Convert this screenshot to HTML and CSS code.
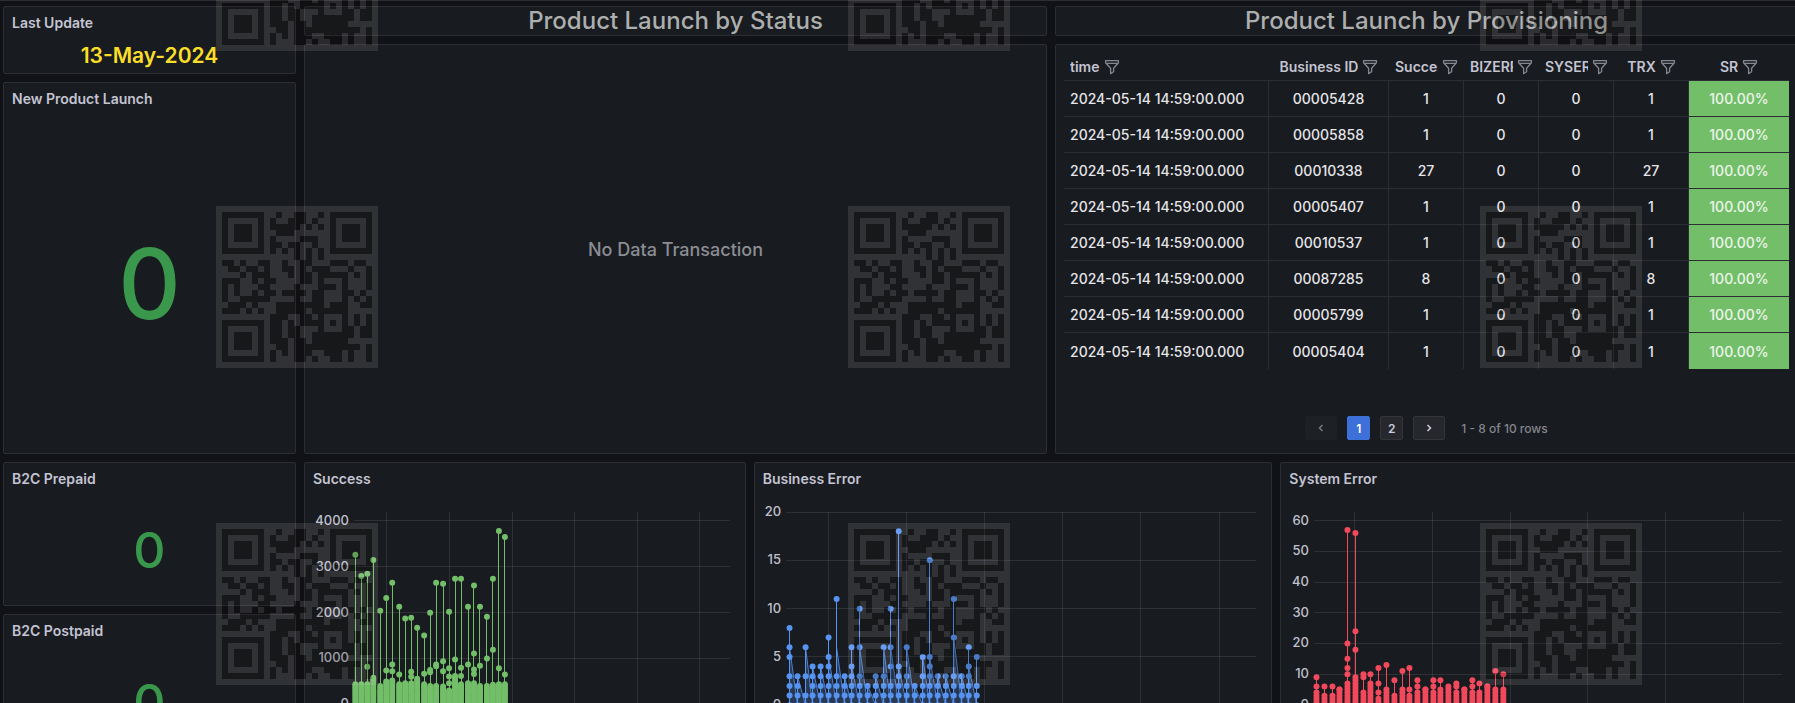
FILE: index.html
```html
<!DOCTYPE html>
<html lang="en">
<head>
<meta charset="utf-8">
<title>Product Launch</title>
<link rel="stylesheet" href="styles.css">
</head>
<body>
<svg class="defs" aria-hidden="true">
  <symbol id="funnel" viewBox="0 0 16 16">
    <path d="M1.6 1.6h12.8v2.2L9.6 9.2v3.6L6.6 14.6V9.2L1.6 3.8zM1.8 4.4h12.4" fill="none" stroke="currentColor" stroke-width="1.3" stroke-linejoin="round"/>
  </symbol>
</svg>
<main class="dashboard">
  <div class="side">
    <section class="panel panel-date"><h2 class="title">Last Update</h2><p class="date">13-May-2024</p></section>
    <section class="panel panel-launch"><h2 class="title">New Product Launch</h2><p class="stat stat-large">0</p></section>
    <section class="panel panel-stat"><h2 class="title">B2C Prepaid</h2><p class="stat">0</p></section>
    <section class="panel panel-stat"><h2 class="title">B2C Postpaid</h2><p class="stat">0</p></section>
  </div>
  <div class="content">
    <div class="halves">
      <h1 class="panel heading">Product Launch by Status</h1>
      <h1 class="panel heading">Product Launch by Provisioning</h1>
      <section class="panel empty"><p>No Data Transaction</p></section>
      <section class="panel table-panel">
        <table class="table">
          <colgroup><col class="c-time"><col class="c-id"><col class="c-num"><col class="c-num"><col class="c-num"><col class="c-num"><col class="c-sr"></colgroup>
          <thead><tr id="head"></tr></thead>
          <tbody id="rows"></tbody>
        </table>
        <nav class="pager" aria-label="Pages">
          <button class="page page-arrow" disabled aria-label="Previous"><svg viewBox="0 0 16 16"><path d="M9.5 5 6.5 8l3 3"/></svg></button>
          <button class="page page-current">1</button>
          <button class="page">2</button>
          <button class="page page-arrow" aria-label="Next"><svg viewBox="0 0 16 16"><path d="m6.5 5 3 3-3 3"/></svg></button>
          <span class="summary">1 - 8 of 10 rows</span>
        </nav>
      </section>
    </div>
    <div class="charts">
      <section class="panel"><h2 class="title">Success</h2><svg class="chart green" id="success" viewBox="0 0 441 220"></svg></section>
      <section class="panel"><h2 class="title">Business Error</h2><svg class="chart blue" id="business" viewBox="0 0 516 220"></svg></section>
      <section class="panel"><h2 class="title">System Error</h2><svg class="chart red" id="system" viewBox="0 0 516 220"></svg></section>
    </div>
  </div>
</main>
<svg class="watermark" aria-hidden="true">
  <defs><pattern id="code" x="216" y="206" width="632" height="317" patternUnits="userSpaceOnUse">
    <path class="mark-light" id="light"/><path class="mark-dark" id="dark"/>
  </pattern></defs>
  <rect width="100%" height="100%" fill="url(#code)"/>
</svg>
<script src="app.js"></script>
</body>
</html>
```
FILE: styles.css
```css
* { box-sizing: border-box; }
body {
  margin: 0;
  height: 100vh;
  overflow: hidden;
  background: #111217;
  border-top: 1px solid #2b2d31;
  color: #ccccdc;
  font-family: Inter, "Liberation Sans", sans-serif;
  font-size: 14px;
  font-weight: 500;
}
h1, h2, p { margin: 0; font-weight: 500; }
.defs { position: absolute; width: 0; height: 0; }
.dashboard {
  display: grid;
  grid-template-columns: 293fr 1494fr;
  gap: 8px;
  margin: 5px -3px 0 3px;
}
.side, .content { display: flex; flex-direction: column; gap: 8px; min-width: 0; }
.panel {
  background: #181b1f;
  border: 1px solid #2c2e33;
  border-radius: 2px;
  min-width: 0;
}
.title { font-size: 14px; font-weight: 600; line-height: 32px; padding: 0 8px; color: #c4c4d3; }
.panel-date { height: 68px; }
.date { color: #fade2a; font-size: 21px; font-weight: 600; line-height: 34px; text-align: center; }
.panel-launch { height: 372px; }
.panel-launch, .panel-stat { display: flex; flex-direction: column; }
.panel-stat { height: 144px; }
.stat {
  flex: 1;
  display: flex;
  align-items: center;
  justify-content: center;
  padding-bottom: 1px;
  color: #3a984c;
  font-size: 50px;
  line-height: 1;
}
.stat-large { font-size: 97px; }
.halves { display: grid; grid-template-columns: 1fr 1fr; gap: 8px; }
.heading { font-size: 24px; line-height: 28px; text-align: center; color: #adaeae; }
.empty { display: flex; align-items: center; justify-content: center; height: 410px; color: #8b8d94; font-size: 18px; font-weight: 400; }
.table-panel { padding: 8px; display: flex; flex-direction: column; }
.table { width: 100%; table-layout: fixed; border-collapse: separate; border-spacing: 0; }
.c-time { width: 205px; }
.c-id { width: 120px; }
.c-num { width: 75px; }
.c-sr { width: 100px; }
.table th { height: 28px; padding: 0 6px; font-weight: 600; border-bottom: 1px solid #2c2e33; color: #c4c4d3; }
.th-inner { display: flex; align-items: center; justify-content: center; gap: 4px; }
.th-inner span { overflow: hidden; white-space: nowrap; }
.table th:first-child .th-inner { justify-content: flex-start; }
.filter { flex: none; display: flex; padding: 0; border: 0; background: none; color: #85868f; }
.filter svg { width: 16px; height: 16px; }
.table td {
  height: 36px;
  padding: 0 6px;
  text-align: center;
  color: #e6e6ea;
  border-right: 1px solid #2c2e33;
  border-bottom: 1px solid #2c2e33;
}
.table td:first-child { text-align: left; white-space: nowrap; }
.table td:last-child { background: #73bf69; color: #edf5ec; border-right: 0; }
.table tr:last-child td { border-bottom: 0; }
.pager { display: flex; align-items: center; justify-content: center; gap: 10px; margin-top: auto; padding-bottom: 5px; }
.page {
  height: 24px;
  width: 23px;
  padding: 0;
  border: 1px solid #33353a;
  border-radius: 2px;
  background: #26282d;
  color: #ccccdc;
  font: 600 12px Inter, sans-serif;
  display: grid;
  place-items: center;
}
.page-arrow { width: 32px; }
.page:disabled { background: #1d2024; border-color: #1d2024; color: #77797f; }
.page-current { background: #3d71d9; border-color: #3d71d9; color: #fff; }
.page svg { width: 16px; height: 16px; fill: none; stroke: currentColor; stroke-width: 1.5; }
.summary { color: #85868f; font-size: 12px; font-weight: 500; margin-left: 6px; }
.charts { display: grid; grid-template-columns: 442fr 519fr 518fr; gap: 8px; }
.chart { display: block; width: 100%; }
.chart text { font-size: 13px; fill: #c0c0ce; text-anchor: end; }
.grid-line { stroke: #ccccdc; stroke-opacity: .12; shape-rendering: crispEdges; }
.green { color: #73bf69; }
.blue { color: #5794f2; }
.red { color: #f2495c; }
.stem { stroke: currentColor; fill: none; shape-rendering: crispEdges; }
.dot { fill: currentColor; }
.area { fill: currentColor; fill-opacity: .25; stroke: currentColor; stroke-opacity: .8; }
.watermark { position: fixed; inset: 0; width: 100%; height: 100%; pointer-events: none; shape-rendering: crispEdges; }
.mark-light { fill: #f8eeea; fill-opacity: .11; }
.mark-dark { fill: #100c08; fill-opacity: .18; }
```
FILE: app.js
```js
const headers = ["time", "Business ID", "Success", "BIZERR", "SYSERR", "TRX", "SR"];
document.getElementById("head").innerHTML = headers.map(h =>
  `<th scope="col"><div class="th-inner"><span>${h}</span><button class="filter" aria-label="Filter ${h}"><svg><use href="#funnel"/></svg></button></div></th>`).join("");

const records = [["00005428", 1], ["00005858", 1], ["00010338", 27], ["00005407", 1],
  ["00010537", 1], ["00087285", 8], ["00005799", 1], ["00005404", 1]];
document.getElementById("rows").innerHTML = records.map(([id, n]) =>
  `<tr>${["2024-05-14 14:59:00.000", id, n, 0, 0, n, "100.00%"].map(v => `<td>${v}</td>`).join("")}</tr>`).join("");

// Each series is [x, values, top of the dense run of points].
function draw(id, o) {
  const y = v => o.zero - v * o.scale;
  const put = [];
  for (const t of o.ticks) {
    put.push(`<path class="grid-line" d="M${o.left} ${y(t)}H${o.right}"/>`);
    put.push(`<text x="${o.left - 5}" y="${y(t) + 4}">${t}</text>`);
  }
  for (const x of o.lines) put.push(`<path class="grid-line" d="M${x} ${o.top}V220"/>`);
  o.data.forEach(([x, values, dense], i) => {
    const next = o.data[i + 1];
    if (o.area && next) {
      const low = values.length > 4 ? values[1] : Math.min(values[0], 6);
      put.push(`<path class="area" d="M${x} ${y(0)}V${y(low)}L${next[0]} ${y(0)}"/>`);
    }
    put.push(`<path class="stem" d="M${x} ${y(values[0])}V220"/>`);
    const all = values.slice();
    for (let v = dense; v >= -o.step * 2; v -= o.step) all.push(v);
    for (const v of all) put.push(`<circle class="dot" cx="${x}" cy="${y(v)}" r="3"/>`);
  });
  document.getElementById(id).innerHTML = put.join("");
}

draw("success", {
  zero: 210, scale: 0.046, step: 45, left: 49, right: 426, top: 17,
  ticks: [0, 1000, 2000, 3000, 4000], lines: [82, 145, 208, 270, 333, 396],
  data: [[50.5, [3260], 440], [56.5, [2800], 440], [62.5, [2850, 820], 440], [68.5, [3150], 580], [75.5, [2040], 400],
    [81.5, [2320, 740], 500], [87.5, [2650, 870, 720], 520], [94.5, [2130, 650], 440], [100.5, [1870], 460], [106.5, [1890, 710, 600], 460],
    [112.5, [1670], 560], [119.5, [1500, 670], 440], [125.5, [2000, 750, 700], 400], [131.5, [2650, 870, 830], 400], [138.5, [2630, 940, 720], 390],
    [144.5, [2020, 790, 610, 460], 300], [150.5, [2740, 980], 620], [156.5, [2740, 800, 620], 440], [163.5, [2130, 870], 460],
    [169.5, [2590, 1110, 760, 660], 460], [175.5, [2130, 840], 400], [182.5, [1910, 1000], 400], [188.5, [2740, 1190], 430],
    [194.5, [3780, 790], 440], [200.5, [3650, 650], 440]]
});

draw("business", {
  zero: 210, scale: 9.65, step: 9, left: 31, right: 500, top: 17, area: true,
  ticks: [0, 5, 10, 15, 20], lines: [73, 151, 229, 307, 385, 464],
  data: [[34.5, [8, 6, 5, 3, 2, 1]], [42.5, [3, 2, 1]], [50.5, [6, 3, 1]], [57.5, [4, 3, 2, 1]], [65.5, [4, 3, 2, 1]],
    [73.5, [7, 5, 4, 3, 2, 1]], [81.5, [11, 3, 2, 1]], [89.5, [3, 2, 1]], [96.5, [6, 4, 3, 2, 1]], [104.5, [10, 6, 3, 2, 1]],
    [112.5, [2, 1]], [120.5, [3, 2, 1]], [128.5, [6, 3, 2, 1]], [135.5, [10, 6, 4, 2, 1]], [143.5, [18, 4, 3, 2, 1]],
    [151.5, [6, 3, 2, 1]], [159.5, [2, 1]], [167.5, [5, 3, 2, 1]], [174.5, [15, 5, 4, 3, 2, 1]], [182.5, [3, 2, 1]],
    [190.5, [3, 2, 1]], [198.5, [11, 7, 3, 2, 1]], [206.5, [3, 2, 1]], [213.5, [6, 4, 3, 2, 1]], [221.5, [5, 2, 1]]
  ].map(([x, v]) => [x, v, 0])
});

draw("system", {
  zero: 210, scale: 3.07, step: 1, left: 33, right: 501, top: 17, area: false,
  ticks: [0, 10, 20, 30, 40, 50, 60], lines: [74, 152, 230, 307, 385, 463],
  data: [[35.5, [9, 6], 4], [43.5, [6], 3], [51.5, [6], 3], [58.5, [5], 5], [66.5, [57, 20, 15, 12, 10], 7], [74.5, [56, 24, 18], 9],
    [82.5, [10, 9], 4], [89.5, [10], 7], [97.5, [12, 7, 4], 2], [105.5, [13], 5], [113.5, [8], 3], [121.5, [11], 5], [128.5, [12, 5], 3],
    [136.5, [8, 6], 4], [144.5, [5], 5], [152.5, [8, 6], 4], [159.5, [8], 5], [167.5, [6], 5], [175.5, [7, 6], 4], [183.5, [5], 5],
    [191.5, [8, 6], 4], [198.5, [7], 4], [206.5, [6], 6], [214.5, [11], 5], [222.5, [10], 5]]
});

const code = [
  "#######..#..##..#.#######", "#.....#.#..###.#..#.....#", "#.###.#.#####.#.#.#.###.#", "#.###.#..###......#.###.#",
  "#.###.#.#....###..#.###.#", "#.....#.##.##..#..#.....#", "#######.#.#.#.#.#.#######", "............#.#.#........",
  "##.#..##..#..##...###.##.", ".##.##.#..##.#.###...#..#", "...#.###...#.##.#####.#.#", "###..#.##....##.#...#...#",
  "#.#...##....#...###.#...#", "#.#..#.##.####.##...##.#.", "#..#####....#..##...#.#.#", ".###.#...########.###..##",
  "###.#.#..#####.######....", "........###..##.#...#.#.#", "#######.##.#.####.#.#.#.#", "#.....#.##.##...#...##.##",
  "#.###.#.##.##..#######.##", "#.###.#.###.##.######....", "#.###.#..##.###########.#", "#.....#.#.#.###..###.#..#",
  "#######.#...##.#..##.#..#"];
const framed = [".".repeat(27), ...code.map(row => `.${row}.`), ".".repeat(27)];
const modules = mark => framed.map((row, r) =>
  [...row].map((m, c) => m === mark ? `M${c * 6} ${r * 6}h6v6h-6z` : "").join("")).join("");
document.getElementById("light").setAttribute("d", modules("."));
document.getElementById("dark").setAttribute("d", modules("#"));
```
